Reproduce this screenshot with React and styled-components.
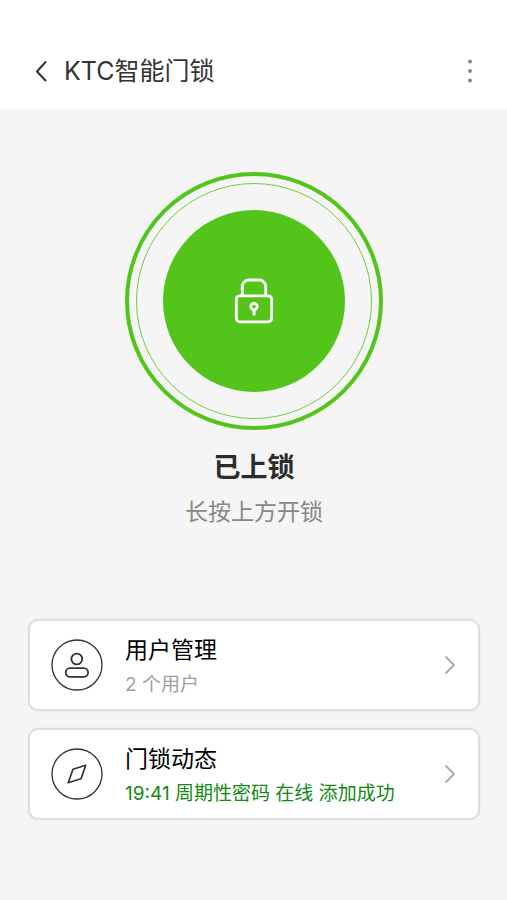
import React from "react";
import styled, { createGlobalStyle } from "styled-components";

const GlobalStyle = createGlobalStyle`
  *, *::before, *::after {
    box-sizing: border-box;
  }

  body {
    background: #f5f5f5;
    font-family: Inter, "Noto Sans CJK SC", sans-serif;
    margin: 0;
  }
`;

const Page = styled.div`
  display: flex;
  flex-direction: column;
  min-height: 100vh;
`;

const Header = styled.header`
  align-items: center;
  background: #fff;
  display: flex;
  padding: 51px 28px 18px;
`;

const IconButton = styled.button`
  background: none;
  border: 0;
  cursor: pointer;
  display: flex;
  height: 40px;
  padding: 0;
  align-items: center;
  justify-content: center;
  width: ${props => props.$width};
`;

const Title = styled.h1`
  color: #333;
  flex: 1;
  font-size: 25px;
  font-weight: 400;
  line-height: 40px;
  margin: 0;
  padding-left: 8px;
`;

const Main = styled.main`
  display: flex;
  flex-direction: column;
  flex: 1;
  padding: 63px 27px 80px 28px;
`;

const LockSection = styled.section`
  align-items: center;
  display: flex;
  flex-direction: column;
  margin-bottom: 91px;
`;

const Ring = styled.div`
  align-items: center;
  border: ${props => props.$thickness} solid ${props => props.$color};
  border-radius: 50%;
  display: flex;
  height: ${props => props.$size};
  justify-content: center;
  width: ${props => props.$size};
`;

const LockButton = styled.button`
  align-items: center;
  background: #52c41a;
  border: 0;
  border-radius: 50%;
  cursor: pointer;
  display: flex;
  height: 182px;
  justify-content: center;
  padding: 0;
  width: 182px;
`;

const Status = styled.h2`
  color: #2b2b2b;
  font-size: 27px;
  font-weight: 700;
  line-height: 40px;
  margin: 18px 0 0;
`;

const Hint = styled.p`
  color: #888;
  font-size: 23px;
  line-height: 32px;
  margin: 8px 0 0;
`;

const Menu = styled.nav`
  display: flex;
  flex-direction: column;
  gap: 17px;
`;

const Card = styled.a`
  align-items: center;
  background: #fff;
  border: 2px solid #dedede;
  border-radius: 10px;
  box-shadow: 0 0 2px rgba(0, 0, 0, 0.08);
  color: #000;
  display: flex;
  padding: 10px 22px 10px 21px;
  text-decoration: none;
`;

const CardText = styled.span`
  display: flex;
  flex: 1;
  flex-direction: column;
  gap: 4px;
  padding: 2px 0 0 22px;
`;

const CardTitle = styled.span`
  font-size: 23px;
  line-height: 34px;
`;

const CardDetail = styled.span`
  color: ${props => (props.$active ? "#128a12" : "#a0a0a0")};
  font-size: 19px;
  line-height: 28px;
`;

const BackIcon = () => (
  <svg width="14" height="22" viewBox="0 0 14 22" fill="none" stroke="#333" strokeWidth="2" strokeLinecap="round" strokeLinejoin="round">
    <path d="M10.5 2 2 11.5 10.5 20.5" />
  </svg>
);

const MoreIcon = () => (
  <svg width="6" height="24" viewBox="0 0 6 24" fill="#888">
    <circle cx="3" cy="2.5" r="2" />
    <circle cx="3" cy="12" r="2" />
    <circle cx="3" cy="21.5" r="2" />
  </svg>
);

const LockIcon = () => (
  <svg width="40" height="46" viewBox="0 0 40 46" fill="none" stroke="#fff" strokeWidth="2.8" strokeLinecap="round">
    <rect x="2.3" y="17.8" width="35.4" height="26" rx="3.5" />
    <path d="M8.3 17.5V8.5a6.5 6.5 0 0 1 6.5-6.5h10.4a6.5 6.5 0 0 1 6.5 6.5v9" />
    <circle cx="20" cy="28.6" r="3.2" />
    <path d="M20 32v4.2" strokeWidth="3" />
  </svg>
);

const UserIcon = () => (
  <svg width="52" height="52" viewBox="0 0 52 52" fill="none" stroke="#333">
    <circle cx="26" cy="26" r="25" strokeWidth="1.3" />
    <circle cx="25.8" cy="20" r="5.4" strokeWidth="1.8" />
    <rect x="14.7" y="29.2" width="22.4" height="8.6" rx="4.3" strokeWidth="1.8" />
  </svg>
);

const CompassIcon = () => (
  <svg width="52" height="52" viewBox="0 0 52 52" fill="none" stroke="#333">
    <circle cx="26" cy="26" r="25" strokeWidth="1.3" />
    <path d="M34.7 17.3 22 21.3 17.2 34.7 30 30.7z" strokeWidth="1.7" strokeLinejoin="round" />
  </svg>
);

const ArrowIcon = () => (
  <svg width="12" height="20" viewBox="0 0 12 20" fill="none" stroke="#aaa" strokeWidth="1.8" strokeLinecap="round" strokeLinejoin="round">
    <path d="M2 2 10 10 2 18" />
  </svg>
);

const MenuCard = ({ href, icon, title, detail, active }) => (
  <Card href={href}>
    {icon}
    <CardText>
      <CardTitle>{title}</CardTitle>
      <CardDetail $active={active}>{detail}</CardDetail>
    </CardText>
    <ArrowIcon />
  </Card>
);

const App = () => (
  <Page lang="zh-CN">
    <GlobalStyle />
    <Header>
      <IconButton $width="28px" aria-label="返回">
        <BackIcon />
      </IconButton>
      <Title>KTC智能门锁</Title>
      <IconButton $width="18px" aria-label="更多">
        <MoreIcon />
      </IconButton>
    </Header>
    <Main>
      <LockSection>
        <Ring $size="258px" $thickness="4px" $color="#52c41a">
          <Ring $size="236px" $thickness="1px" $color="#6fce40">
            <LockButton aria-label="开锁">
              <LockIcon />
            </LockButton>
          </Ring>
        </Ring>
        <Status>已上锁</Status>
        <Hint>长按上方开锁</Hint>
      </LockSection>
      <Menu>
        <MenuCard
          href="#users"
          icon={<UserIcon />}
          title="用户管理"
          detail="2 个用户"
        />
        <MenuCard
          href="#activity"
          icon={<CompassIcon />}
          title="门锁动态"
          detail="19:41 周期性密码 在线 添加成功"
          active
        />
      </Menu>
    </Main>
  </Page>
);

export default App;
